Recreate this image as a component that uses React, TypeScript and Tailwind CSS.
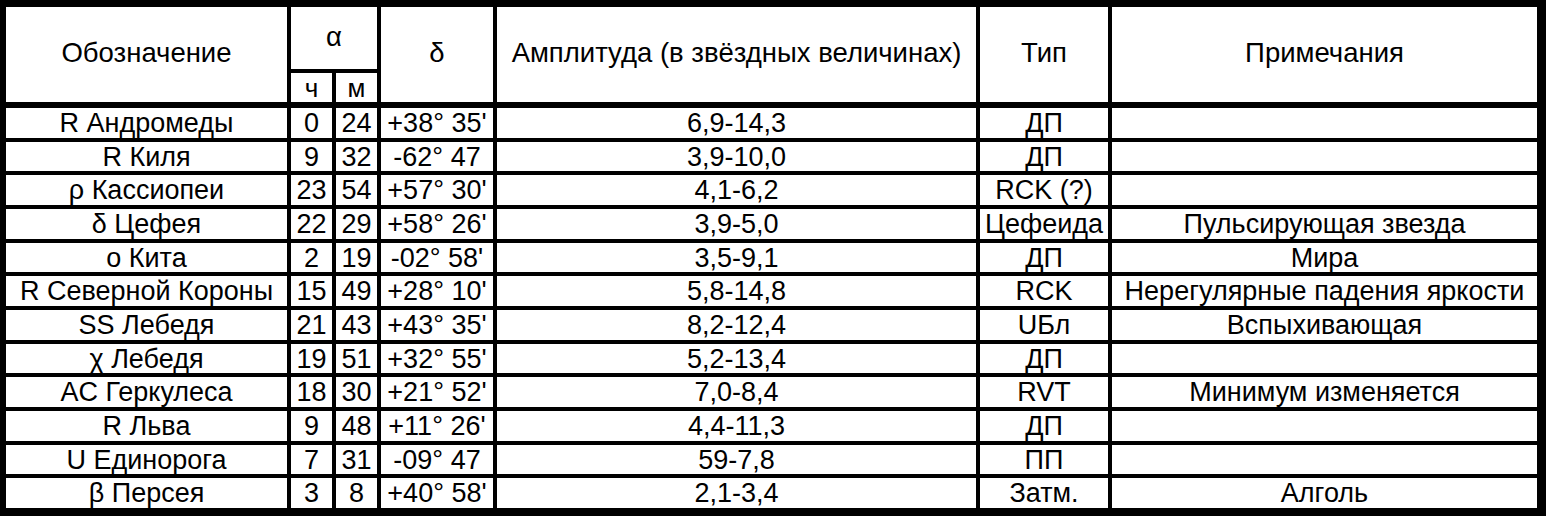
const rows = [
  ["R Андромеды", "0", "24", "+38° 35'", "6,9-14,3", "ДП", ""],
  ["R Киля", "9", "32", "-62° 47", "3,9-10,0", "ДП", ""],
  ["ρ Кассиопеи", "23", "54", "+57° 30'", "4,1-6,2", "RCK (?)", ""],
  ["δ Цефея", "22", "29", "+58° 26'", "3,9-5,0", "Цефеида", "Пульсирующая звезда"],
  ["ο Кита", "2", "19", "-02° 58'", "3,5-9,1", "ДП", "Мира"],
  ["R Северной Короны", "15", "49", "+28° 10'", "5,8-14,8", "RCK", "Нерегулярные падения яркости"],
  ["SS Лебедя", "21", "43", "+43° 35'", "8,2-12,4", "UБл", "Вспыхивающая"],
  ["χ Лебедя", "19", "51", "+32° 55'", "5,2-13,4", "ДП", ""],
  ["AC Геркулеса", "18", "30", "+21° 52'", "7,0-8,4", "RVT", "Минимум изменяется"],
  ["R Льва", "9", "48", "+11° 26'", "4,4-11,3", "ДП", ""],
  ["U Единорога", "7", "31", "-09° 47", "59-7,8", "ПП", ""],
  ["β Персея", "3", "8", "+40° 58'", "2,1-3,4", "Затм.", "Алголь"],
]

const cell = "bg-white flex items-center justify-center whitespace-nowrap"

export default function App() {
  return (
    <div
      className="w-[1546px] h-[516px] bg-black pt-[7px] pl-[6px] pr-[9px] pb-[8px] flex flex-col text-black text-[27px] leading-none"
      style={{ fontFamily: '"Liberation Sans", Arial, sans-serif' }}
    >
      {/* header */}
      <div className="h-[95px] grid grid-cols-[281px_41px_41px_112px_479px_128px_1fr] grid-rows-[62px_1fr] gap-x-[4px] gap-y-[4px] text-[27.5px]">
        <div className={`${cell} row-span-2 pb-[4px]`}>Обозначение</div>
        <div className={`${cell} col-span-2 pb-[2px]`}>α</div>
        <div className={`${cell} row-span-2 pb-[4px]`}>δ</div>
        <div className={`${cell} row-span-2 pb-[4px]`}>Амплитуда (в звёздных величинах)</div>
        <div className={`${cell} row-span-2 pb-[4px]`}>Тип</div>
        <div className={`${cell} row-span-2 pb-[4px]`}>Примечания</div>
        <div className={`${cell} col-start-2 row-start-2 text-[26px]`}>ч</div>
        <div className={`${cell} col-start-3 row-start-2 text-[26px]`}>м</div>
      </div>

      {/* data */}
      <div className="mt-[6px] flex-1 flex flex-col gap-[4px]">
        {rows.map((r, i) => (
          <div key={i} className="flex-1 grid grid-cols-[281px_41px_41px_112px_479px_128px_1fr] gap-x-[4px]">
            {r.map((v, j) => (
              <div key={j} className={`${cell} pt-[1px]`}>
                {v}
              </div>
            ))}
          </div>
        ))}
      </div>
    </div>
  )
}
